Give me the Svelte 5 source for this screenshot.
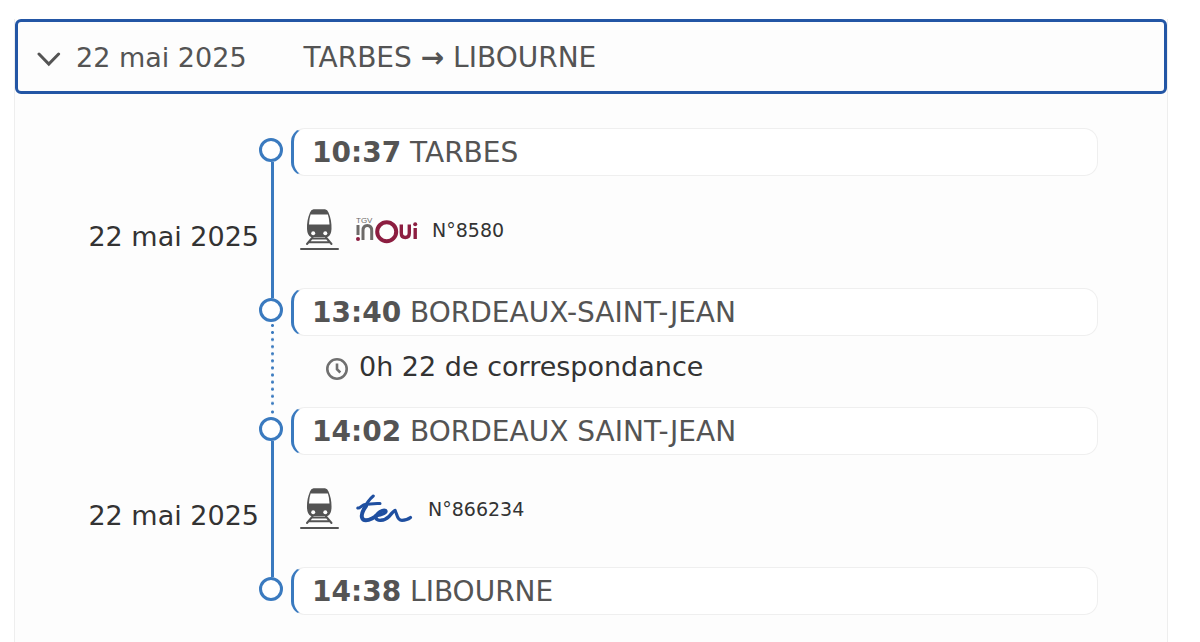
<script>
  let open = $state(true);

  const date = '22 mai 2025';

  // above / below: how the track is drawn on each side of the stop
  const steps = [
    { type: 'stop', time: '10:37', name: 'TARBES', above: 'none', below: 'solid' },
    { type: 'leg', date, brand: 'inoui', number: 'N°8580' },
    { type: 'stop', time: '13:40', name: 'BORDEAUX-SAINT-JEAN', above: 'solid', below: 'dotted' },
    { type: 'transfer', text: '0h 22 de correspondance' },
    { type: 'stop', time: '14:02', name: 'BORDEAUX SAINT-JEAN', above: 'dotted', below: 'solid' },
    { type: 'leg', date, brand: 'ter', number: 'N°866234' },
    { type: 'stop', time: '14:38', name: 'LIBOURNE', above: 'solid', below: 'none' }
  ];
</script>

<main class="page">
  <section class="journey">
    <button class="journey-header" aria-expanded={open} onclick={() => (open = !open)}>
      <svg class="chevron" class:closed={!open} width="24" height="16" viewBox="0 0 24 16" aria-hidden="true">
        <path d="M2 3 L11.8 13 L21.6 3" fill="none" stroke="#545454" stroke-width="3" stroke-linecap="round" />
      </svg>
      <span class="journey-date">{date}</span>
      <span>TARBES <b>→</b> LIBOURNE</span>
    </button>

    {#if open}
      <div class="timeline">
        {#each steps as step}
          {#if step.type === 'stop'}
            <div class="row">
              <div class="date"></div>
              <div class="track">
                <div class="line before {step.above}"></div>
                <div class="dot"></div>
                <div class="line {step.below}"></div>
              </div>
              <div class="stop"><strong>{step.time}</strong> {step.name}</div>
            </div>
          {:else if step.type === 'leg'}
            <div class="row leg-row">
              <div class="date">{step.date}</div>
              <div class="track"><div class="line solid"></div></div>
              <div class="leg">
                <svg class="train" width="40" height="42" viewBox="0 0 40 42" aria-hidden="true">
                  <path d="M14.5 0.3 H26 Q28.5 0.6 29.5 3.5 C31.8 9 32.7 14 32.5 20 Q32.2 26.500 28.500 28 H12 Q8.300 26.500 8 20 C7.800 14 8.700 9 11 3.500 Q12 0.600 14.500 0.300Z" fill="#545454" />
                  <path d="M11.6 5.600 H28.900 Q30.300 10 30.500 15.400 H10 Q10.200 10 11.600 5.600Z" fill="#fff" />
                  <circle cx="14.2" cy="24.3" r="2" fill="#fff" />
                  <circle cx="26.3" cy="24.3" r="2" fill="#fff" />
                  <path d="M13.5 28.5 L8 35 M27 28.5 L32.5 35 M13 29.5 H27.5 M10.5 33.2 H30" fill="none" stroke="#545454" stroke-width="2" stroke-linecap="round" />
                  <path d="M2 40 H39" stroke="#545454" stroke-width="2" stroke-linecap="round" />
                </svg>
                {#if step.brand === 'inoui'}
                  <svg width="62" height="30" viewBox="0 0 62 30" role="img" aria-label="TGV INOUI">
                    <text x="0" y="8" class="tgv">TGV</text>
                    <g fill="none" stroke="#6d6a68" stroke-width="3">
                      <path d="M2 10 V20" />
                      <path d="M7 25 V15.500 Q7 10.500 11.300 10.500 Q15.700 10.500 15.700 15.500 V25" />
                    </g>
                    <circle cx="2" cy="24" r="2" fill="#8c1d40" />
                    <g fill="none" stroke="#8c1d40">
                      <circle cx="30.7" cy="16.7" r="9.5" stroke-width="4" />
                      <path d="M45.3 9.500 V18 Q45.300 22.500 49.300 22.500 Q53.300 22.500 53.300 18 V9.500" stroke-width="3.400" />
                      <path d="M59.200 13 V24" stroke-width="3.400" />
                    </g>
                    <circle cx="59.200" cy="9.200" r="2" fill="#8c1d40" />
                  </svg>
                {:else}
                  <svg width="58" height="30" viewBox="0 0 58 30" role="img" aria-label="TER">
                    <g fill="none" stroke="#1f4fa0" stroke-linecap="round" stroke-linejoin="round">
                      <path d="M17.300 2 C13.500 5 10 10 7 17" stroke-width="3" />
                      <path d="M10 12 C7.500 15.500 5 20 6 23.500 C7 27.500 12 26.500 16 24.500 C19 23 20 22 21 21.200" stroke-width="4" />
                      <path d="M1.800 14 C4.500 15 5.500 10.500 10 10.300 C15 10 18 9.200 24 9.600" stroke-width="3" />
                      <path d="M20 21.500 C26 21 31.500 18.300 29.500 16.500 C27 15 20.500 19 20 23 C19.800 28 28.500 27 33 22.500 C35.500 20 36.500 17.500 39 16.500" stroke-width="3.400" />
                      <path d="M38.800 17 C41.500 18 40 26.300 46 26.300 C50 26.300 52 25.500 54.500 23.500" stroke-width="3.200" />
                    </g>
                  </svg>
                {/if}
                <span class="number">{step.number}</span>
              </div>
            </div>
          {:else}
            <div class="row transfer-row">
              <div class="date"></div>
              <div class="track"><div class="line dotted"></div></div>
              <div class="transfer">
                <svg class="clock" width="24" height="24" viewBox="0 0 24 24" aria-hidden="true">
                  <circle cx="12" cy="12" r="9.7" fill="none" stroke="#707070" stroke-width="2.6" />
                  <path d="M12 6.5 V12.3 L15.3 15.5" fill="none" stroke="#707070" stroke-width="2.6" />
                </svg>
                {step.text}
              </div>
            </div>
          {/if}
        {/each}
      </div>
    {/if}
  </section>
</main>

<style>
  :global(body) {
    background: #fff;
  }

  .page {
    box-sizing: border-box;
    display: flex;
    flex-direction: column;
    min-height: 100vh;
    padding: 19px 32px 0 14px;
    font-family: Verdana, "DejaVu Sans", sans-serif;
    font-size: 28px;
    line-height: 34px;
    color: #333;
  }

  .journey {
    flex: 1;
    background: #fdfdfd;
    border: solid #eee;
    border-width: 0 1px;
  }

  .journey-header {
    box-sizing: border-box;
    display: flex;
    align-items: center;
    width: 100%;
    height: 75px;
    padding: 2px 19px 0;
    border: 3px solid #2356a5;
    border-radius: 6px;
    background: #fdfdfd;
    color: #545454;
    font: inherit;
    text-align: left;
    cursor: pointer;
  }
  .chevron { margin: 2px 15px 0 0; }
  .chevron.closed { transform: rotate(-90deg); }
  .journey-date {
    margin-right: 57px;
    font-size: 27px;
  }

  .timeline {
    padding: 34px 69px 24px 0;
  }

  .row {
    display: grid;
    grid-template-columns: 244px 24px 1fr;
    min-height: 48px;
  }
  .leg-row { min-height: 112px; }
  .transfer-row { min-height: 71px; }

  .date {
    display: flex;
    align-items: center;
    justify-content: flex-end;
    padding-top: 10px;
    font-size: 27px;
    white-space: nowrap;
  }

  /* --- track --- */
  .track {
    display: flex;
    flex-direction: column;
  }
  .line {
    flex: 1;
    width: 3px;
    margin-left: 12px;
  }
  .line.before { flex: 0 0 10px; }
  .line.solid { background: #3a7abf; }
  .line.dotted {
    background: radial-gradient(circle, #3a7abf 1px, transparent 2px) 0 0 / 3px 7px round;
  }
  .dot {
    box-sizing: border-box;
    width: 24px;
    height: 24px;
    border: 3px solid #3a7abf;
    border-radius: 50%;
    background: #fff;
  }

  /* --- content --- */
  .stop {
    box-sizing: border-box;
    margin-left: 8px;
    padding: 7px 18px 5px;
    border: 1px solid #efefef;
    border-left: 3px solid #3a7abf;
    border-radius: 14px;
    background: #fff;
    color: #545454;
  }
  .leg {
    display: flex;
    align-items: center;
    gap: 14px;
    padding: 0 0 4px 16px;
  }
  .train { margin-right: 3px; }
  .tgv {
    font-family: "Liberation Sans", Arial, sans-serif;
    font-size: 8px;
    fill: #6d6a68;
  }
  .number {
    font-size: 19px;
    line-height: 24px;
  }
  .transfer {
    display: flex;
    align-items: center;
    gap: 10px;
    padding: 0 0 10px 42px;
    font-size: 27px;
  }
  .clock { margin-top: 4px; }
</style>
